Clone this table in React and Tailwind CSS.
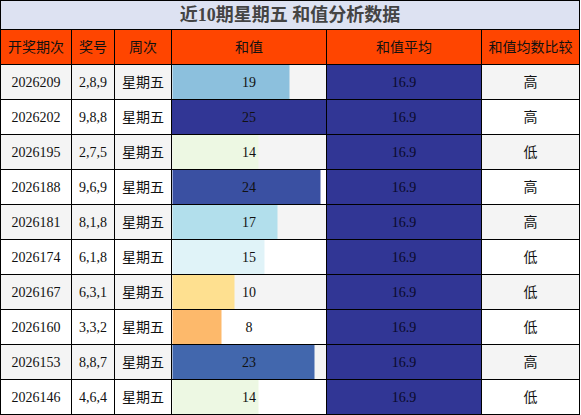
const rows = [
  { id: '2026209', nums: '2,8,9', sum: 19, cmp: '高' },
  { id: '2026202', nums: '9,8,8', sum: 25, cmp: '高' },
  { id: '2026195', nums: '2,7,5', sum: 14, cmp: '低' },
  { id: '2026188', nums: '9,6,9', sum: 24, cmp: '高' },
  { id: '2026181', nums: '8,1,8', sum: 17, cmp: '高' },
  { id: '2026174', nums: '6,1,8', sum: 15, cmp: '低' },
  { id: '2026167', nums: '6,3,1', sum: 10, cmp: '低' },
  { id: '2026160', nums: '3,3,2', sum: 8, cmp: '低' },
  { id: '2026153', nums: '8,8,7', sum: 23, cmp: '高' },
  { id: '2026146', nums: '4,6,4', sum: 14, cmp: '低' },
];

// colour scale for the sum bars
const barColor = {
  25: '#313695',
  24: '#3a50a2',
  23: '#4267ad',
  19: '#8cc0dd',
  17: '#b2dfec',
  15: '#e0f3f8',
  14: '#edf8e3',
  10: '#fee090',
  8: '#fdb96b',
};

const MAX = 25;

export default function App() {
  return (
    <div className="w-[581px] h-[415px] bg-white font-['Liberation_Serif','Noto_Sans_CJK_SC',serif] text-[14px] text-[#111]">
      <table className="w-[579px] table-fixed border-collapse border border-black">
        <colgroup>
          <col className="w-[71px]" />
          <col className="w-[43px]" />
          <col className="w-[57px]" />
          <col className="w-[155px]" />
          <col className="w-[155px]" />
          <col className="w-[98px]" />
        </colgroup>
        <thead>
          <tr className="h-[29px] bg-[#dde2f2]">
            <th colSpan={6} className="border border-black p-0 text-[18px] font-bold text-[#444] leading-none">
              近10期星期五 和值分析数据
            </th>
          </tr>
          <tr className="h-[35px] bg-[#ff4500] text-[#111]">
            {['开奖期次', '奖号', '周次', '和值', '和值平均', '和值均数比较'].map((h) => (
              <th key={h} className="border border-black p-0 font-normal whitespace-nowrap">
                {h}
              </th>
            ))}
          </tr>
        </thead>
        <tbody>
          {rows.map((r, i) => {
            const pct = (r.sum / MAX) * 100;
            return (
              <tr key={r.id} className={`h-[35px] ${i % 2 === 0 ? 'bg-[#f4f4f4]' : 'bg-white'}`}>
                <td className="border border-black p-0 text-center">{r.id}</td>
                <td className="border border-black p-0 text-center">{r.nums}</td>
                <td className="border border-black p-0 text-center">星期五</td>
                <td
                  className="border border-black p-0 text-center"
                  style={{
                    background: `linear-gradient(90deg, ${barColor[r.sum]} ${pct}%, transparent ${pct}%)`,
                  }}
                >
                  {r.sum}
                </td>
                <td className="border border-black p-0 text-center bg-[#313695] text-[#0a0a2a]">16.9</td>
                <td className="border border-black p-0 text-center">{r.cmp}</td>
              </tr>
            );
          })}
        </tbody>
      </table>
    </div>
  );
}
